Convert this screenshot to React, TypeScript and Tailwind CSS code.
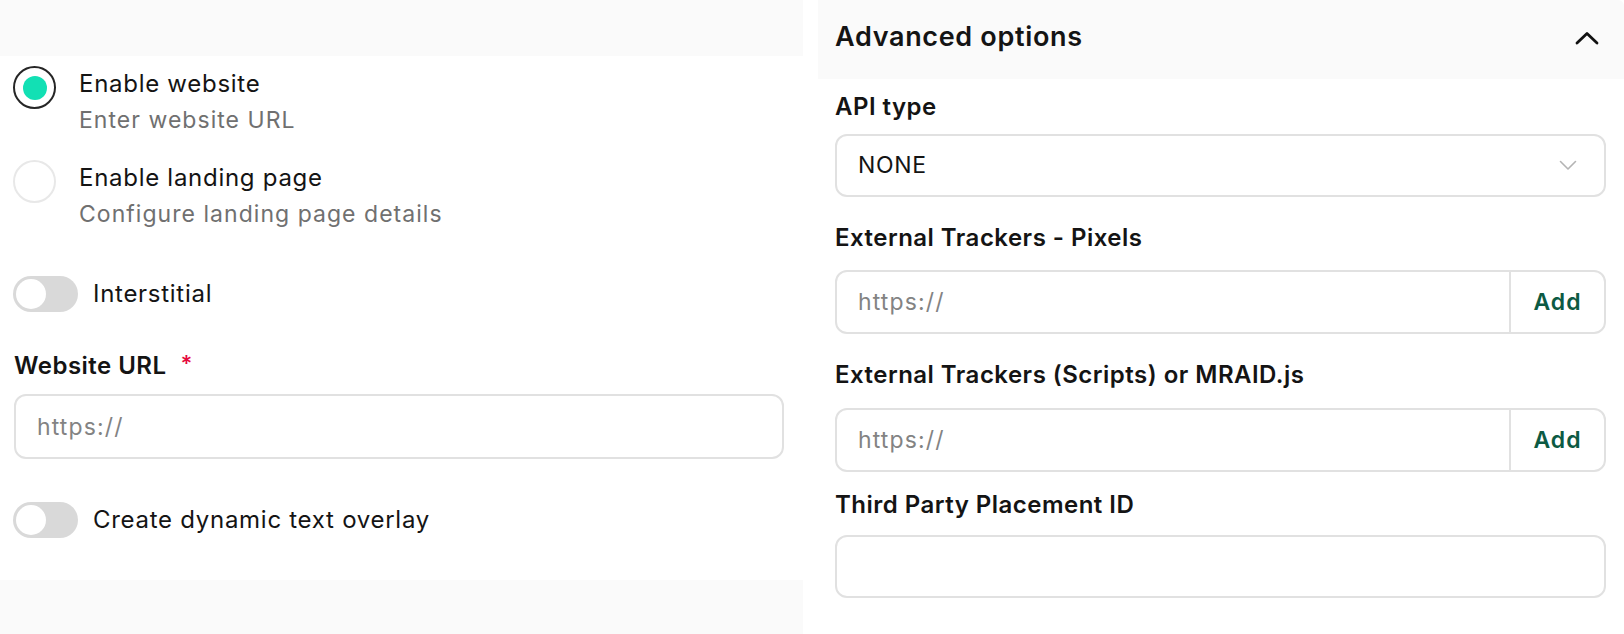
import { useState } from "react";

type Mode = "website" | "landing";

function Radio({
  checked,
  title,
  hint,
  onSelect,
}: {
  checked: boolean;
  title: string;
  hint: string;
  onSelect: () => void;
}) {
  return (
    <button type="button" onClick={onSelect} className="flex items-start gap-[23px] text-left">
      <span
        className={`flex h-[43px] w-[43px] shrink-0 items-center justify-center rounded-full border-2 ${
          checked ? "border-[#262626]" : "border-[#e8e8e8]"
        }`}
      >
        {checked && <span className="h-[24px] w-[24px] rounded-full bg-[#12e0b4]" />}
      </span>
      <span className="block">
        <span className="block text-[24px] leading-[36px] tracking-[0.03em] text-[#141414]">{title}</span>
        <span className="block text-[23px] leading-[36px] tracking-[0.045em] text-[#707070]">{hint}</span>
      </span>
    </button>
  );
}

function Toggle({ label }: { label: string }) {
  const [on, setOn] = useState(false);
  return (
    <button type="button" onClick={() => setOn(!on)} className="flex items-center gap-[15px]">
      <span
        className={`flex h-[36px] w-[65px] items-center rounded-full p-[3px] ${
          on ? "justify-end bg-[#12e0b4]" : "justify-start bg-[#d9d9d9]"
        }`}
      >
        <span className="h-[30px] w-[30px] rounded-full bg-white" />
      </span>
      <span className="text-[24px] leading-[36px] tracking-[0.03em] text-[#141414]">{label}</span>
    </button>
  );
}

function Label({ children }: { children: React.ReactNode }) {
  return (
    <div className="text-[24px] font-semibold leading-[36px] tracking-[0.02em] text-[#141414]">{children}</div>
  );
}

function AddInput() {
  return (
    <div className="flex h-[64px] overflow-hidden rounded-[12px] border-2 border-[#e1e1e1]">
      <input
        placeholder="https://"
        className="min-w-0 flex-1 px-[21px] text-[23px] tracking-[0.05em] text-[#141414] outline-none placeholder:text-[#838383]"
      />
      <button className="w-[95px] border-l-2 border-[#e1e1e1] text-[23px] font-semibold tracking-[0.04em] text-[#0c5a43]">
        Add
      </button>
    </div>
  );
}

export default function App() {
  const [mode, setMode] = useState<Mode>("website");

  return (
    <div className="flex h-[634px] w-[1624px] overflow-hidden bg-white font-['Inter','Liberation_Sans',sans-serif]">
      <div className="flex w-[803px] shrink-0 flex-col">
        <div className="h-[56px] bg-[#fafafa]" />
        <div className="flex flex-col pl-[13px] pr-[19px]">
          <div className="mt-[10px]">
            <Radio
              checked={mode === "website"}
              title="Enable website"
              hint="Enter website URL"
              onSelect={() => setMode("website")}
            />
          </div>
          <div className="mt-[22px]">
            <Radio
              checked={mode === "landing"}
              title="Enable landing page"
              hint="Configure landing page details"
              onSelect={() => setMode("landing")}
            />
          </div>
          <div className="mt-[44px]">
            <Toggle label="Interstitial" />
          </div>
          <div className="mt-[36px] flex items-start pl-[1px]">
            <Label>Website URL</Label>
            <span className="ml-[14px] text-[22px] font-semibold leading-[30px] text-[#e5093d]">*</span>
          </div>
          <input
            placeholder="https://"
            className="ml-[1px] mt-[10px] h-[65px] rounded-[12px] border-2 border-[#e1e1e1] px-[21px] text-[23px] tracking-[0.05em] text-[#141414] outline-none placeholder:text-[#838383]"
          />
          <div className="mt-[43px]">
            <Toggle label="Create dynamic text overlay" />
          </div>
        </div>
        <div className="mt-auto h-[54px] bg-[#fafafa]" />
      </div>

      <div className="ml-[15px] flex flex-1 flex-col">
        <div className="flex h-[79px] items-center justify-between rounded-tr-[6px] bg-[#fafafa] pb-[5px] pl-[17px] pr-[25px]">
          <span className="text-[27px] font-semibold leading-[36px] tracking-[0.025em] text-[#141414]">
            Advanced options
          </span>
          <svg width="24" height="14" viewBox="0 0 24 14" fill="none" className="mt-[2px]">
            <path d="M2 12 L12 2.5 L22 12" stroke="#111" strokeWidth="2.8" strokeLinecap="round" strokeLinejoin="round" />
          </svg>
        </div>
        <div className="flex flex-col pl-[17px] pr-[18px]">
          <div className="mt-[10px]">
            <Label>API type</Label>
          </div>
          <div className="mt-[9px] flex h-[63px] items-center justify-between rounded-[12px] border-2 border-[#e1e1e1] pl-[21px] pr-[27px]">
            <span className="text-[23px] tracking-[0.03em] text-[#141414]">NONE</span>
            <svg width="18" height="11" viewBox="0 0 18 11" fill="none">
              <path d="M1.5 1.5 L9 9 L16.5 1.5" stroke="#b4b4b4" strokeWidth="1.6" strokeLinecap="round" strokeLinejoin="round" />
            </svg>
          </div>
          <div className="mt-[23px]">
            <Label>External Trackers - Pixels</Label>
          </div>
          <div className="mt-[14px]">
            <AddInput />
          </div>
          <div className="mt-[23px]">
            <Label>External Trackers (Scripts) or MRAID.js</Label>
          </div>
          <div className="mt-[15px]">
            <AddInput />
          </div>
          <div className="mt-[15px]">
            <Label>Third Party Placement ID</Label>
          </div>
          <input className="mt-[12px] h-[63px] rounded-[12px] border-2 border-[#e1e1e1] px-[21px] text-[23px] outline-none" />
        </div>
      </div>
    </div>
  );
}
